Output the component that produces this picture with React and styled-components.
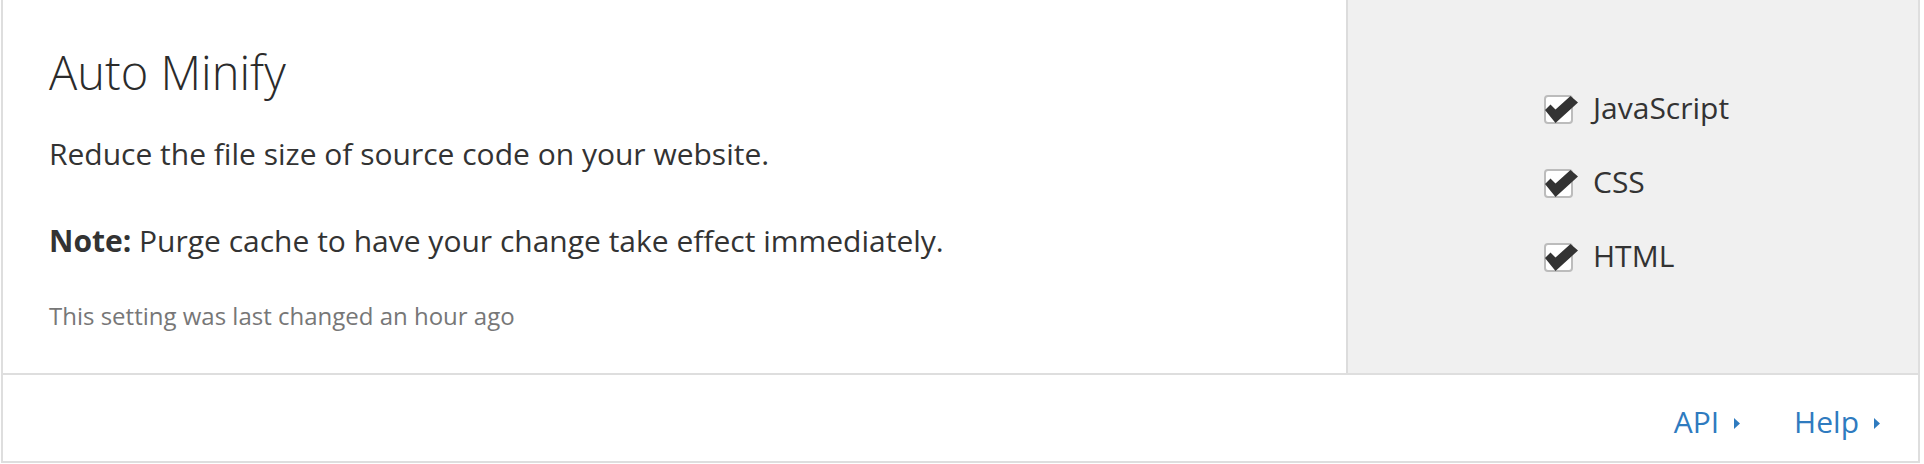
import React from "react";
import styled, { createGlobalStyle } from "styled-components";

const GlobalStyle = createGlobalStyle`
  html, body {
    margin: 0;
    padding: 0;
    background: #ffffff;
  }
  body {
    font-family: "Open Sans", "Liberation Sans", sans-serif;
    color: #333333;
  }
  * { box-sizing: border-box; }
`;

const Card = styled.section`
  width: 1919px;
  margin-left: 1px;
  border: 2px solid #dedede;
  border-top: none;
  background: #ffffff;
`;

const Body = styled.div`
  display: flex;
  height: 375px;
  border-bottom: 2px solid #dedede;
`;

const Main = styled.div`
  flex: 1;
  padding: 44px 46px 0;
`;

const Title = styled.h3`
  margin: 0;
  font-size: 47px;
  line-height: 56px;
  font-weight: 300;
  color: #2b2b2b;
  white-space: nowrap;
`;

const Text = styled.p`
  margin: ${(p) => p.$mt}px 0 0;
  font-size: 30px;
  line-height: 40px;
  color: #333333;
  white-space: nowrap;
  strong { font-weight: 700; }
`;

const Meta = styled.p`
  margin: 39px 0 0;
  font-size: 24px;
  line-height: 32px;
  color: #777777;
  white-space: nowrap;
`;

const Panel = styled.div`
  width: 572px;
  background: #f0f0f0;
  border-left: 2px solid #dcdcdc;
  padding: 88px 0 0 196px;
  display: flex;
  flex-direction: column;
  gap: 34px;
`;

const Option = styled.label`
  display: flex;
  align-items: flex-start;
  gap: 20px;
  cursor: pointer;
`;

const Box = styled.span`
  position: relative;
  width: 29px;
  height: 29px;
  margin-top: 7px;
  border: 2px solid #bcbcbc;
  border-radius: 4px;
  background: #ffffff;
  flex: none;
`;

const Check = styled.svg`
  position: absolute;
  left: -1px;
  top: -1px;
  width: 33px;
  height: 27px;
  overflow: visible;
`;

const OptionLabel = styled.span`
  font-size: 30px;
  line-height: 40px;
  color: #333333;
`;

const Footer = styled.div`
  height: 86px;
  display: flex;
  justify-content: flex-end;
  align-items: flex-start;
  padding: 27px 38px 0 0;
  gap: 54px;
`;

const Link = styled.a`
  display: flex;
  align-items: center;
  gap: 15px;
  font-size: 30px;
  line-height: 40px;
  color: #2f7bbf;
  text-decoration: none;
`;

const Caret = styled.svg`
  width: 6px;
  height: 11px;
  fill: #2f7bbf;
  margin-top: 2px;
`;

const CheckMark = () => (
  <Check viewBox="0 0 33 27">
    <polygon points="0,14 5.5,8.5 10.5,13.5 25.5,0 33,6.5 10.5,27" fill="#333333" />
  </Check>
);

const options = ["JavaScript", "CSS", "HTML"];

export default function App() {
  return (
    <>
      <GlobalStyle />
      <Card>
        <Body>
          <Main>
            <Title>Auto Minify</Title>
            <Text $mt={34}>Reduce the file size of source code on your website.</Text>
            <Text $mt={47}>
              <strong>Note:</strong> Purge cache to have your change take effect immediately.
            </Text>
            <Meta>This setting was last changed an hour ago</Meta>
          </Main>
          <Panel>
            {options.map((o) => (
              <Option key={o}>
                <Box>
                  <CheckMark />
                </Box>
                <OptionLabel>{o}</OptionLabel>
              </Option>
            ))}
          </Panel>
        </Body>
        <Footer>
          <Link href="#">
            API
            <Caret viewBox="0 0 6 11">
              <polygon points="0,0 6,5.5 0,11" />
            </Caret>
          </Link>
          <Link href="#">
            Help
            <Caret viewBox="0 0 6 11">
              <polygon points="0,0 6,5.5 0,11" />
            </Caret>
          </Link>
        </Footer>
      </Card>
    </>
  );
}
